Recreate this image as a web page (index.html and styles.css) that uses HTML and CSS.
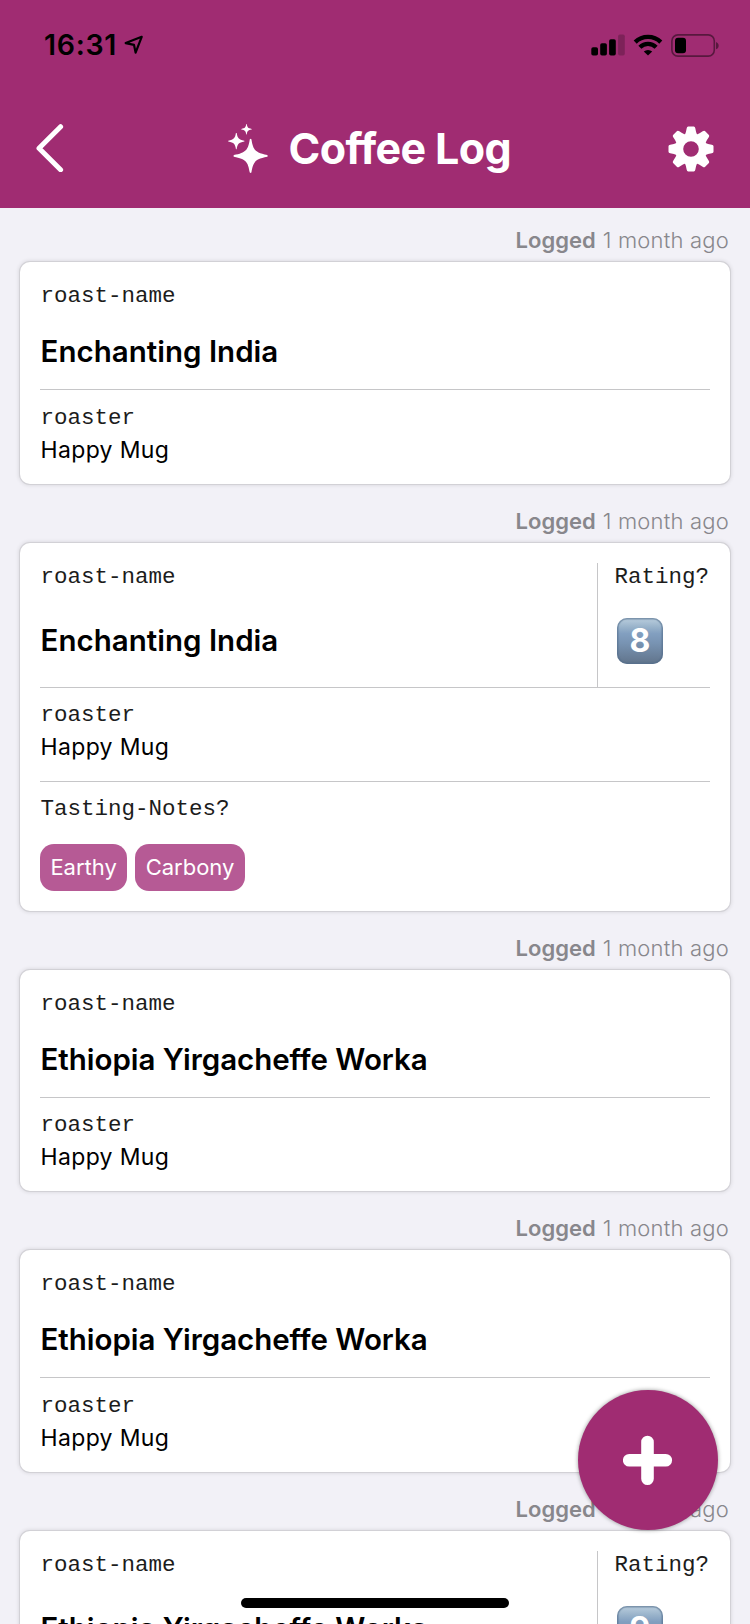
FILE: index.html
```html
<!DOCTYPE html>
<html lang="en">
<head>
<meta charset="utf-8">
<title>Coffee Log</title>
<link rel="stylesheet" href="styles.css">
</head>
<body>
<div class="screen">
  <header class="header">
    <div class="status">
      <div class="clock">
        <span class="time">16:31</span>
        <svg class="arrow" width="20" height="20" viewBox="0 0 20 20"><path d="M17.7 1.8 1.7 8.1 10 9.9 11.6 17.6Z" fill="none" stroke="#000" stroke-width="2.2" stroke-linejoin="round"/></svg>
      </div>
      <div class="indicators">
        <svg width="34" height="22" viewBox="0 0 34 22"><rect x="0.3" y="13.3" width="6.7" height="8.2" rx="1.8"/><rect x="9.2" y="9.3" width="6.7" height="12.2" rx="1.8"/><rect x="18.1" y="5.3" width="6.7" height="16.2" rx="1.8"/><rect x="27.1" y=".5" width="6.7" height="21" rx="1.8" opacity=".22"/></svg>
        <svg width="30" height="22" viewBox="0 0 30 22"><g fill="none" stroke="#000" stroke-width="4.300"><path d="M2.2 8.1a18.2 18.2 0 0 1 25.6 0"/><path d="M6.9 13.3a11.5 11.5 0 0 1 16.2 0"/></g><path d="M15 21.4 10.800 17.600a6 6 0 0 1 8.4 0Z"/></svg>
        <svg width="48" height="23" viewBox="0 0 48 23"><rect x=".9" y=".9" width="42.4" height="21.2" rx="6" fill="none" stroke="#000" stroke-opacity=".45" stroke-width="1.6"/><rect x="4" y="3.7" width="11" height="15.6" rx="3"/><path d="M45 8c3.6 1.3 3.6 6 0 7.300Z" opacity=".45"/></svg>
      </div>
    </div>
    <div class="nav">
      <svg width="28" height="48" viewBox="0 0 28 48"><path d="M24.600 2.700 3 24.300 24.600 45.700" fill="none" stroke="#fff" stroke-width="5" stroke-linecap="round" stroke-linejoin="round"/></svg>
      <div class="heading">
        <svg width="40" height="49" viewBox="0 0 40 49"><defs><path id="spark" d="M-.8-16.700Q0-17.400.8-16.700C2.600-6 4.500-3.200 16.700-.9Q17.400 0 16.700.9C4.500 3.200 2.600 6 .8 16.700Q0 17.400-.8 16.700C-2.600 6-4.500 3.200-16.700.9Q-17.400 0-16.700-.9C-4.500-3.200-2.600-6-.8-16.700Z"/></defs><g fill="#fff"><use href="#spark" transform="translate(22.600 31.900)"/><use href="#spark" transform="translate(8.300 17.100) scale(.48)"/><use href="#spark" transform="translate(18.500 5.300) scale(.31)"/></g></svg>
        <h1>Coffee Log</h1>
      </div>
      <svg width="46" height="46" viewBox="-23 -23 46 46"><defs><path id="tooth" d="M-6.200-14Q-4.900-16.800-4.300-20.800Q-4-22.500-2.800-22.500H2.800Q4-22.500 4.300-20.800Q4.900-16.800 6.200-14Z"/></defs><g fill="#fff"><circle r="11.800" fill="none" stroke="#fff" stroke-width="8"/><use href="#tooth"/><use href="#tooth" transform="rotate(45)"/><use href="#tooth" transform="rotate(90)"/><use href="#tooth" transform="rotate(135)"/><use href="#tooth" transform="rotate(180)"/><use href="#tooth" transform="rotate(225)"/><use href="#tooth" transform="rotate(270)"/><use href="#tooth" transform="rotate(315)"/></g></svg>
    </div>
  </header>

  <main class="feed">
    <p class="logged"><b>Logged</b> <span>1 month ago</span></p>
    <article class="card">
      <div class="top"><div class="field"><div class="label">roast-name</div><div class="name">Enchanting India</div></div></div>
      <div class="row roomy"><div class="label">roaster</div><div class="value">Happy Mug</div></div>
    </article>

    <p class="logged"><b>Logged</b> <span>1 month ago</span></p>
    <article class="card">
      <div class="top rated">
        <div class="field"><div class="label">roast-name</div><div class="name">Enchanting India</div></div>
        <div class="rating"><div class="label">Rating?</div><div class="keycap">8</div></div>
      </div>
      <div class="row"><div class="label">roaster</div><div class="value">Happy Mug</div></div>
      <div class="row"><div class="label">Tasting-Notes?</div><div class="tags"><span class="tag">Earthy</span><span class="tag">Carbony</span></div></div>
    </article>

    <p class="logged"><b>Logged</b> <span>1 month ago</span></p>
    <article class="card">
      <div class="top"><div class="field"><div class="label">roast-name</div><div class="name long">Ethiopia Yirgacheffe Worka</div></div></div>
      <div class="row"><div class="label">roaster</div><div class="value">Happy Mug</div></div>
    </article>

    <p class="logged"><b>Logged</b> <span>1 month ago</span></p>
    <article class="card">
      <div class="top"><div class="field"><div class="label">roast-name</div><div class="name long">Ethiopia Yirgacheffe Worka</div></div></div>
      <div class="row roomy"><div class="label">roaster</div><div class="value">Happy Mug</div></div>
    </article>

    <p class="logged"><b>Logged</b> <span>1 month ago</span></p>
    <article class="card">
      <div class="top rated">
        <div class="field"><div class="label">roast-name</div><div class="name long">Ethiopia Yirgacheffe Worka</div></div>
        <div class="rating"><div class="label">Rating?</div><div class="keycap">9</div></div>
      </div>
    </article>
  </main>

  <div class="fab"><svg width="50" height="50" viewBox="0 0 50 50"><path d="M24.500 7V43.700M6.200 25.300H42.800" stroke="#fff" stroke-width="12.600" stroke-linecap="round"/></svg></div>
  <div class="home-bar"></div>
</div>
</body>
</html>
```
FILE: styles.css
```css
* { box-sizing: border-box; }
body { margin: 0; font-family: Inter, "Liberation Sans", sans-serif; font-feature-settings: "calt" 0, "liga" 0; color: #000; }
svg { display: block; flex: none; }
.screen { position: relative; width: 750px; height: 1624px; overflow: hidden; background: #f2f1f7; }

.header { height: 208px; background: #a02c72; }
.status { display: flex; justify-content: space-between; height: 90px; padding: 0 31px 0 44px; }
.clock { display: flex; }
.time { padding-top: 26px; font-size: 28.500px; line-height: 37px; font-weight: 600; letter-spacing: 0.700px; width: 80px; white-space: nowrap; }
.arrow { margin-top: 35px; }
.indicators { display: flex; gap: 8px; padding-top: 33.500px; }

.nav { display: flex; align-items: flex-start; justify-content: space-between; padding: 34px 36px 0 36px; }
.nav > svg { margin-top: 1.500px; }
.nav > svg:first-child { margin-top: 0; }
.heading { display: flex; padding-left: 7px; }
.heading h1 { margin: -1px 0 0 20.500px; color: #fff; font-size: 43px; line-height: 50px; font-weight: 700; letter-spacing: -0.650px; white-space: nowrap; }

.feed { padding: 0 20px; }
.logged { margin: 0; height: 59px; padding: 22px 1px 0 0; display: flex; justify-content: flex-end; gap: 7px; font-size: 22px; line-height: 30px; color: #88878c; white-space: nowrap; }
.logged:first-child { height: 54px; padding-top: 17px; }
.logged b { font-weight: 600; letter-spacing: 0; }
.logged span { font-weight: 300; letter-spacing: 0.200px; }

.card { padding: 0 20px; background: #fff; border-radius: 10px; box-shadow: 0 0 0 1px #d2d1d6, 0 0 4px 1px rgba(0, 0, 0, 0.120); }
.top { display: flex; padding-top: 20px; }
.field { flex: 1; padding-bottom: 20px; }
.label { height: 30px; padding-left: 0.600px; font-family: "Liberation Mono", monospace; font-size: 22.500px; line-height: 28px; color: #1c1c1c; white-space: nowrap; }
.name { margin-top: 21px; padding-left: 0.500px; font-size: 29.500px; line-height: 36px; font-weight: 600; letter-spacing: 0.020px; white-space: nowrap; }
.name.long { letter-spacing: -0.040px; }
.rated .field { padding-bottom: 29px; }
.rated .name { margin-top: 29px; }
.rating { width: 113px; padding-left: 16px; border-left: 1px solid #c6c6c8; }
.keycap { width: 46px; height: 46px; margin: 25px 0 0 3px; border-radius: 10px; background: linear-gradient(#b4c9da 4%, #98b2ca 20%, #829fc0 34%, #7893b2 55%, #63778f 95%); box-shadow: inset 0 0 1px 1.500px rgba(82, 108, 138, 0.600); color: #fff; font-size: 32px; line-height: 46px; font-weight: 700; text-align: center; }

.row { border-top: 1px solid #c6c6c8; padding: 13px 0 19px; }
.row.roomy { padding-top: 14px; }
.value { margin-top: 1px; padding-left: 0.500px; font-size: 23px; line-height: 30px; letter-spacing: 0.350px; white-space: nowrap; }
.tags { display: flex; gap: 8px; margin: 19px 0 1px; }
.tag { height: 47px; padding: 0 10.400px; border-radius: 14px; background: #b65a95; color: #fff; font-size: 22px; line-height: 47px; }

.fab { position: absolute; left: 578px; top: 1390px; width: 140px; height: 140px; display: flex; align-items: center; justify-content: center; border-radius: 50%; background: #a02c72; box-shadow: 0 0 4px rgba(0, 0, 0, 0.400); }
.home-bar { position: absolute; left: 241px; top: 1598px; width: 268px; height: 10px; border-radius: 5px; background: #000; }
```
